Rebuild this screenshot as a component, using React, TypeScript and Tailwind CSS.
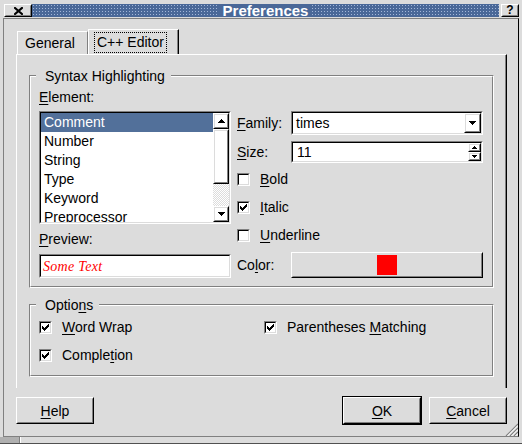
import React from "react";

const SANS = "font-['Liberation_Sans',Arial,sans-serif]";

function U({ children }: { children: React.ReactNode }) {
  return <span className="underline decoration-1 underline-offset-[2px]">{children}</span>;
}

function Raised({ className = "", children }: { className?: string; children?: React.ReactNode }) {
  return (
    <div className={"border border-t-white border-l-white border-r-black border-b-black " + className}>
      <div className="w-full h-full border border-t-[#dcdcdc] border-l-[#dcdcdc] border-r-[#808080] border-b-[#808080] flex items-center justify-center">
        {children}
      </div>
    </div>
  );
}

function Sunken({ className = "", innerClass = "", children }: { className?: string; innerClass?: string; children?: React.ReactNode }) {
  return (
    <div className={"border border-t-[#808080] border-l-[#808080] border-r-white border-b-white " + className}>
      <div className={"w-full h-full border border-t-black border-l-black border-r-[#dcdcdc] border-b-[#dcdcdc] " + innerClass}>
        {children}
      </div>
    </div>
  );
}

function CheckMark() {
  return (
    <svg width="7" height="7" viewBox="0 0 7 7" shapeRendering="crispEdges">
      <path d="M0 2h1v1h1v1h1v-1h1v-1h1v-1h1v-1h1v3h-1v1h-1v1h-1v1h-1v1h-1v-1h-1v-1h-1z" fill="#000" />
    </svg>
  );
}

function CheckBox({ checked }: { checked?: boolean }) {
  return (
    <Sunken className="w-[13px] h-[13px] shrink-0" innerClass="bg-white flex items-center justify-center">
      {checked ? <CheckMark /> : null}
    </Sunken>
  );
}

function ArrowUp() {
  return (
    <svg width="7" height="4" viewBox="0 0 7 4" shapeRendering="crispEdges">
      <path d="M3 0h1v1h1v1h1v1h1v1h-7v-1h1v-1h1v-1h1z" fill="#000" />
    </svg>
  );
}
function ArrowDown() {
  return (
    <svg width="7" height="4" viewBox="0 0 7 4" shapeRendering="crispEdges">
      <path d="M0 0h7v1h-1v1h-1v1h-1v1h-1v-1h-1v-1h-1v-1h-1z" fill="#000" />
    </svg>
  );
}
function SmallUp() {
  return (
    <svg width="5" height="3" viewBox="0 0 5 3" shapeRendering="crispEdges">
      <path d="M2 0h1v1h1v1h1v1h-5v-1h1v-1h1z" fill="#000" />
    </svg>
  );
}
function SmallDown() {
  return (
    <svg width="5" height="3" viewBox="0 0 5 3" shapeRendering="crispEdges">
      <path d="M0 0h5v1h-1v1h-1v1h-1v-1h-1v-1h-1z" fill="#000" />
    </svg>
  );
}

function GroupBox({ label, className = "", children }: { label: React.ReactNode; className?: string; children?: React.ReactNode }) {
  return (
    <div className={"relative border border-t-[#808080] border-l-[#808080] border-r-white border-b-white " + className}>
      <div className="w-full h-full border border-t-white border-l-white border-r-[#808080] border-b-[#808080]">
        {children}
      </div>
      <div className="absolute left-[6px] -top-[8px] bg-[#dcdcdc] pl-[9px] pr-[6px] leading-[16px]">{label}</div>
    </div>
  );
}

function CheckRow({ checked, children }: { checked?: boolean; children: React.ReactNode }) {
  return (
    <div className="h-[28px] flex items-center">
      <CheckBox checked={checked} />
      <span className="ml-[10px] leading-[16px]">{children}</span>
    </div>
  );
}

const items = ["Comment", "Number", "String", "Type", "Keyword", "Preprocessor"];

export default function App() {
  return (
    <div className={"w-[522px] h-[444px] bg-[#dcdcdc] flex flex-col text-[14px] text-black overflow-hidden " + SANS}>
      {/* Title bar */}
      <div className="h-[18px] shrink-0 flex items-start pt-[4px] pl-[4px] pr-[3px]">
        <Raised className="w-[28px] h-[13px]">
          <svg width="9" height="8" viewBox="0 0 9 8">
            <path d="M1 1L8 7M8 1L1 7" stroke="#000" strokeWidth="2.2" strokeLinecap="square" />
          </svg>
        </Raised>
        <div className="flex-1 h-[13px] bg-[#4a6898] bg-[radial-gradient(#a2b6d8_0.8px,transparent_1px)] bg-[length:3px_3px] flex items-center justify-center">
          <span className="bg-[#4a6898] px-[4px] h-[13px] flex items-center text-white font-bold text-[15px] leading-[13px]">
            Preferences
          </span>
        </div>
        <Raised className="ml-[2px] w-[18px] h-[13px]">
          <span className="font-bold text-[12px] leading-[11px]">?</span>
        </Raised>
      </div>

      {/* Client */}
      <div className="relative ml-[3px] w-[516px] h-[419px] shrink-0 border border-t-[#808080] border-l-[#808080] border-r-black border-b-[#808080] flex flex-col">
        {/* Tabs */}
        <div className="pt-[10px] pl-[13px] flex items-end h-[35px] shrink-0">
          <div className="w-[71px] h-[23px] border-t border-l border-white border-r border-r-[#808080] pl-[7px] pt-[3px] leading-[16px]">
            General
          </div>
          <div className="w-[91px] h-[25px] border-t border-l border-white border-r border-r-black">
            <div className="h-full border-r border-[#808080] pt-[2px] pl-[5px]">
              <div className="inline-block border border-dotted border-black px-[2px] h-[21px] leading-[18px]">
                C++ Editor
              </div>
            </div>
          </div>
        </div>

        {/* Tab panel */}
        <div className="ml-[12px] w-[491px] h-[334px] shrink-0 border-t border-l border-white border-r border-r-black">
          <div className="h-full border-r border-[#808080] pt-[20px] pl-[12px]">
            <GroupBox label="Syntax Highlighting" className="w-[465px] h-[213px]">
              <div className="pt-[12px] pl-[8px]">
                <div className="leading-[16px]">
                  <U>E</U>lement:
                </div>
                <div className="mt-[6px] flex">
                  {/* Left column */}
                  <div className="w-[192px] flex flex-col">
                    <Sunken className="w-[192px] h-[113px]" innerClass="bg-white flex overflow-hidden">
                      <div className="flex-1 overflow-hidden">
                        {items.map((it, i) => (
                          <div
                            key={it}
                            className={
                              "h-[19px] leading-[19px] pl-[3px] whitespace-nowrap " +
                              (i === 0 ? "bg-[#52709a] text-white" : "")
                            }
                          >
                            {it}
                          </div>
                        ))}
                      </div>
                      <div className="w-[16px] flex flex-col">
                        <Raised className="w-[16px] h-[16px] shrink-0">
                          <ArrowUp />
                        </Raised>
                        <Raised className="w-[16px] h-[55px] shrink-0" />
                        <div className="flex-1 bg-[repeating-conic-gradient(#ffffff_0%_25%,#dcdcdc_0%_50%)] bg-[length:2px_2px]" />
                        <Raised className="w-[16px] h-[16px] shrink-0">
                          <ArrowDown />
                        </Raised>
                      </div>
                    </Sunken>
                    <div className="mt-[7px] leading-[16px]">
                      <U>P</U>review:
                    </div>
                    <Sunken className="mt-[7px] w-[192px] h-[24px]" innerClass="bg-white pl-[2px]">
                      <span className="font-['Liberation_Serif','Times_New_Roman',serif] italic text-[14px] tracking-[0.3px] leading-[20px] text-[#ff0000]">
                        Some Text
                      </span>
                    </Sunken>
                  </div>

                  {/* Right column */}
                  <div className="ml-[6px] w-[246px] flex flex-col">
                    <div className="h-[24px] flex items-center">
                      <span className="w-[54px] leading-[16px]">
                        <U>F</U>amily:
                      </span>
                      <Sunken className="w-[192px] h-[24px]" innerClass="bg-white flex items-center">
                        <span className="flex-1 pl-[3px] leading-[16px]">times</span>
                        <Raised className="w-[17px] h-full">
                          <ArrowDown />
                        </Raised>
                      </Sunken>
                    </div>
                    <div className="mt-[6px] h-[22px] flex items-center">
                      <span className="w-[54px] leading-[16px]">
                        <U>S</U>ize:
                      </span>
                      <Sunken className="w-[192px] h-[22px]" innerClass="bg-white flex items-center">
                        <span className="flex-1 pl-[4px] leading-[16px]">11</span>
                        <div className="w-[13px] h-full flex flex-col">
                          <Raised className="w-[13px] h-[9px]">
                            <SmallUp />
                          </Raised>
                          <Raised className="w-[13px] h-[9px]">
                            <SmallDown />
                          </Raised>
                        </div>
                      </Sunken>
                    </div>
                    <div className="mt-[2px]">
                      <CheckRow>
                        <U>B</U>old
                      </CheckRow>
                      <CheckRow checked>
                        <U>I</U>talic
                      </CheckRow>
                      <CheckRow>
                        <U>U</U>nderline
                      </CheckRow>
                    </div>
                    <div className="mt-[3px] h-[26px] flex items-center">
                      <span className="w-[54px] leading-[16px]">
                        Co<U>l</U>or:
                      </span>
                      <Raised className="w-[192px] h-[26px]">
                        <div className="w-[20px] h-[20px] bg-[#ff0000]" />
                      </Raised>
                    </div>
                  </div>
                </div>
              </div>
            </GroupBox>

            <GroupBox
              label={
                <>
                  Optio<U>n</U>s
                </>
              }
              className="mt-[16px] w-[465px] h-[73px]"
            >
              <div className="pt-[7px] pl-[8px] grid grid-cols-[225px_1fr]">
                <CheckRow checked>
                  <U>W</U>ord Wrap
                </CheckRow>
                <CheckRow checked>
                  Parentheses <U>M</U>atching
                </CheckRow>
                <CheckRow checked>
                  Comple<U>t</U>ion
                </CheckRow>
              </div>
            </GroupBox>
          </div>
        </div>

        {/* Buttons */}
        <div className="mt-[8px] h-[29px] pl-[12px] pr-[11px] flex items-center shrink-0">
          <Raised className="w-[78px] h-[27px]">
            <span className="leading-[16px]">
              <U>H</U>elp
            </span>
          </Raised>
          <div className="flex-1" />
          <div className="w-[80px] h-[29px] border border-black">
            <Raised className="w-full h-full">
              <span className="leading-[16px]">
                <U>O</U>K
              </span>
            </Raised>
          </div>
          <Raised className="ml-[7px] w-[78px] h-[27px]">
            <span className="leading-[16px]">
              <U>C</U>ancel
            </span>
          </Raised>
        </div>

        {/* Size grip */}
        <svg className="absolute right-0 bottom-0" width="13" height="13" viewBox="0 0 13 13">
          <path d="M13 1L1 13M13 5L5 13M13 9L9 13" stroke="#808080" strokeWidth="1.2" />
          <path d="M13 2.5L2.5 13M13 6.5L6.5 13M13 10.5L10.5 13" stroke="#ffffff" strokeWidth="1" />
        </svg>
      </div>

      {/* Bottom strip */}
      <div className="h-[7px] shrink-0 flex border-b border-[#505050]">
        <div className="w-[20px] bg-[#b0b0b0] border-r border-[#808080]" />
        <div className="flex-1 border-l border-white" />
      </div>
    </div>
  );
}
